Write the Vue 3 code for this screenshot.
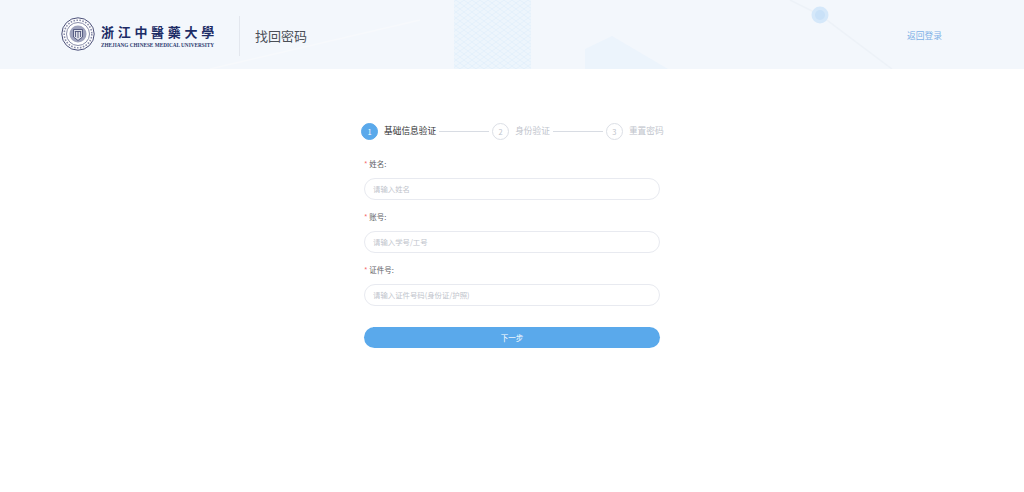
<template>
  <div class="page">
    <header class="top-bar">
      <svg class="decor" width="1024" height="69" viewBox="0 0 1024 69" aria-hidden="true">
        <defs>
          <pattern id="weave" width="8" height="6" patternUnits="userSpaceOnUse">
            <path d="M0 0 L8 6 M8 0 L0 6" stroke="#e3f0fb" stroke-width="1" fill="none" />
          </pattern>
        </defs>
        <rect x="454" y="0" width="77" height="69" fill="#edf5fc" />
        <rect x="454" y="0" width="77" height="69" fill="url(#weave)" />
        <path d="M585 69 L585 49 L612 36 L668 69 Z" fill="#ecf4fc" />
        <path d="M790 0 L820 15 L892 69" stroke="#edf2f8" stroke-width="1.5" fill="none" />
        <path d="M210 69 L420 20" stroke="#f7f9fc" stroke-width="1.5" fill="none" />
        <circle cx="820" cy="15" r="8.5" fill="#d5e8fa" />
        <circle cx="820" cy="15" r="5" fill="#c9e1f8" />
      </svg>
      <div class="brand">
        <svg class="seal" width="34" height="34" viewBox="0 0 34 34" aria-hidden="true">
          <circle cx="17" cy="17" r="16.2" fill="#fff" stroke="#4a4f78" stroke-width="1" />
          <circle cx="17" cy="17" r="11.5" fill="none" stroke="#6a6f92" stroke-width="0.8" />
          <circle cx="17" cy="17" r="13.8" fill="none" stroke="#8a8eab" stroke-width="1.6" stroke-dasharray="1.6 1.4" />
          <circle cx="17" cy="17" r="8.5" fill="#9fa3bd" />
          <path d="M12.5 12.5 H21.5 V20 L17 23.5 L12.5 20 Z" fill="#dfe1ea" stroke="#3f4570" stroke-width="0.8" />
          <path d="M14.5 14.5 V20 M17 14.5 V21 M19.5 14.5 V20 M13.8 14.5 H20.2" stroke="#3f4570" stroke-width="0.8" fill="none" />
        </svg>
        <div class="wordmark">
          <div class="wordmark-cn">浙江中醫藥大學</div>
          <div class="wordmark-en">ZHEJIANG CHINESE MEDICAL UNIVERSITY</div>
        </div>
      </div>
      <div class="page-title">找回密码</div>
      <a class="back-link">返回登录</a>
    </header>

    <main class="content">
      <div class="steps">
        <template v-for="(step, i) in steps" :key="step">
          <span v-if="i > 0" class="step-line"></span>
          <span class="step-num" :class="{ active: i === 0 }">{{ i + 1 }}</span>
          <span class="step-text" :class="{ active: i === 0 }">{{ step }}</span>
        </template>
      </div>

      <form class="form" @submit.prevent>
        <div v-for="field in fields" :key="field.label" class="field">
          <label class="field-label"><span class="req">*</span> {{ field.label }}:</label>
          <input class="field-input" type="text" :placeholder="field.placeholder" />
        </div>
        <button class="next-btn" type="submit">下一步</button>
      </form>
    </main>
  </div>
</template>

<script setup>
const steps = ['基础信息验证', '身份验证', '重置密码'];

const fields = [
  { label: '姓名', placeholder: '请输入姓名' },
  { label: '账号', placeholder: '请输入学号/工号' },
  { label: '证件号', placeholder: '请输入证件号码(身份证/护照)' },
];
</script>

<style>
html,
body {
  margin: 0;
  background: #fff;
}
</style>

<style scoped>
.page {
  width: 1024px;
  height: 492px;
  overflow: hidden;
  font-family: "Noto Sans CJK SC", "Liberation Sans", sans-serif;
}

.top-bar {
  position: relative;
  display: flex;
  align-items: center;
  height: 69px;
  padding: 0 82px 0 61px;
  background: #f3f7fc;
  box-sizing: border-box;
}

.decor {
  position: absolute;
  left: 0;
  top: 0;
}

.brand {
  position: relative;
  display: flex;
  align-items: center;
  gap: 6px;
  width: 179px;
  height: 40px;
  margin-top: 3px;
  border-right: 1px solid #e3e7ee;
  box-sizing: border-box;
}

.seal {
  flex: none;
  margin-top: -4px;
}

.wordmark {
  width: 115px;
  margin-top: -3px;
}

.wordmark-cn {
  font-size: 13px;
  line-height: 19px;
  font-weight: 700;
  color: #1d2c66;
  letter-spacing: 3.7px;
  white-space: nowrap;
}

.wordmark-en {
  margin-top: 1px;
  font-family: "Liberation Serif", serif;
  font-size: 5.25px;
  line-height: 6px;
  font-weight: 700;
  color: #2d3a70;
  white-space: nowrap;
}

.page-title {
  position: relative;
  margin-top: 1px;
  margin-left: 15px;
  font-size: 13px;
  color: #4a4f57;
}

.back-link {
  position: relative;
  margin-top: 2px;
  margin-left: auto;
  font-size: 8.75px;
  color: #7db0e6;
  cursor: pointer;
}

.content {
  width: 304px;
  margin: 0 auto;
  padding-top: 53px;
}

.steps {
  display: flex;
  align-items: center;
  height: 18px;
  padding-left: 1px;
}

.step-num {
  flex: none;
  width: 17px;
  height: 17px;
  margin-right: 6px;
  border: 1px solid #dcdfe6;
  border-radius: 50%;
  box-sizing: border-box;
  text-align: center;
  font-size: 7.5px;
  line-height: 15px;
  color: #c0c4cc;
}

.step-num.active {
  background: #5aa9eb;
  border-color: #5aa9eb;
  color: #fff;
}

.step-text {
  flex: none;
  margin-top: -2px;
  font-size: 8.7px;
  color: #c0c4cc;
  white-space: nowrap;
}

.step-text.active {
  color: #303133;
}

.step-line {
  flex: none;
  width: 50px;
  height: 1px;
  margin: 0 3px;
  background: #d8dce3;
}

.form {
  padding: 11px 3px 0 4px;
}

.field {
  display: flex;
  flex-direction: column;
  height: 53px;
}

.field-label {
  height: 27px;
  padding-top: 6px;
  box-sizing: border-box;
  font-size: 7.5px;
  line-height: 14px;
  color: #606266;
}

.req {
  color: #f56c6c;
}

.field-input {
  width: 296px;
  height: 22px;
  padding: 0 8px 2px;
  border: 1px solid #e8eaf0;
  border-radius: 11px;
  box-sizing: border-box;
  outline: none;
  background: #fff;
  font-family: inherit;
  font-size: 7.4px;
  color: #606266;
}

.field-input::placeholder {
  color: #c0c4cc;
}

.next-btn {
  display: block;
  width: 296px;
  height: 21px;
  margin-top: 17px;
  padding: 0;
  border: none;
  border-radius: 11px;
  background: #5aa9eb;
  font-family: inherit;
  font-size: 7.5px;
  color: #fff;
  cursor: pointer;
}
</style>
